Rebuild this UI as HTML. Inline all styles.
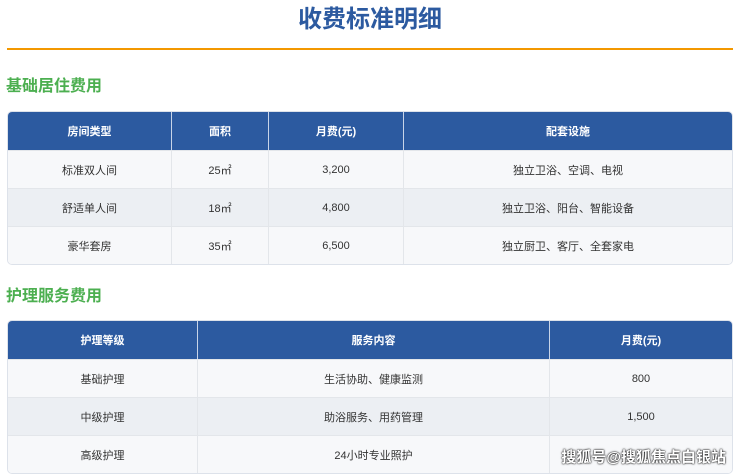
<!DOCTYPE html>
<html><head><meta charset="utf-8"><style>
*{margin:0;padding:0;box-sizing:border-box}
body{width:740px;height:473px;overflow:hidden;background:#fff;font-family:"Liberation Sans","Noto Sans CJK SC",sans-serif;position:relative}
h1{position:absolute;left:0;width:740px;top:4px;text-align:center;font-size:24px;color:#2c5aa0;font-weight:bold;line-height:32px}
.line{position:absolute;left:7px;width:726px;top:48px;height:2px;background:#f39800}
h2{position:absolute;left:6px;font-size:16px;color:#4caf50;font-weight:bold;line-height:22px}
table{position:absolute;left:7px;width:726px;border-collapse:separate;border-spacing:0;border-radius:5px;overflow:hidden;border:1px solid #dde2ea;font-size:11px;color:#333;text-align:center}
th{background:#2c5aa0;color:#fff;font-weight:bold;height:38px;border-right:1px solid #c8d4e8}
td{height:38px;border-right:1px solid #e3e6ea;border-top:1px solid #e3e6ea}
th:last-child,td:last-child{border-right:none}
tr:nth-child(odd) td{background:#f7f8fa}
tr:nth-child(even) td{background:#eceff3}
.wm{position:absolute;right:14px;bottom:6px;color:#fff;font-size:15px;font-weight:bold;text-shadow:0 0 2px #000,0 0 1px #000}
</style></head><body>
<h1>收费标准明细</h1>
<div class="line"></div>
<h2 style="top:76px">基础居住费用</h2>
<table style="top:111px">
<thead><tr><th style="width:164px">房间类型</th><th style="width:97px">面积</th><th style="width:135px">月费(元)</th><th>配套设施</th></tr></thead>
<tbody>
<tr><td>标准双人间</td><td>25㎡</td><td>3,200</td><td>独立卫浴、空调、电视</td></tr>
<tr><td>舒适单人间</td><td>18㎡</td><td>4,800</td><td>独立卫浴、阳台、智能设备</td></tr>
<tr><td>豪华套房</td><td>35㎡</td><td>6,500</td><td>独立厨卫、客厅、全套家电</td></tr>
</tbody></table>
<h2 style="top:286px">护理服务费用</h2>
<table style="top:320px">
<thead><tr><th style="width:190px">护理等级</th><th style="width:352px">服务内容</th><th>月费(元)</th></tr></thead>
<tbody>
<tr><td>基础护理</td><td>生活协助、健康监测</td><td>800</td></tr>
<tr><td>中级护理</td><td>助浴服务、用药管理</td><td>1,500</td></tr>
<tr><td>高级护理</td><td>24小时专业照护</td><td></td></tr>
</tbody></table>
<div class="wm">搜狐号@搜狐焦点白银站</div>
</body></html>
